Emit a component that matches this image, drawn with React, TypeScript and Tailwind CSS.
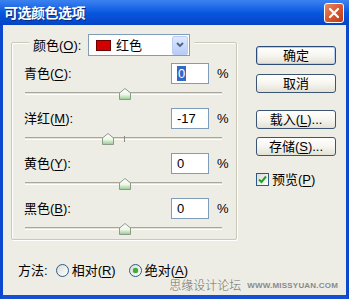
import React from "react";

const U = ({ c }: { c: string }) => <span className="underline underline-offset-[2px]">{c}</span>;

function Thumb({ x }: { x: number }) {
  return (
    <svg
      className="absolute top-[4px]"
      style={{ left: x - 6 }}
      width="12"
      height="12"
      viewBox="0 0 12 12"
    >
      <defs>
        <linearGradient id={`tg${x}`} x1="0" y1="0" x2="0" y2="1">
          <stop offset="0" stopColor="#ffffff" />
          <stop offset="0.55" stopColor="#eef5ea" />
          <stop offset="1" stopColor="#8fcf86" />
        </linearGradient>
      </defs>
      <polygon points="6,0.5 11.5,5 11.5,11.5 0.5,11.5 0.5,5" fill={`url(#tg${x})`} stroke="#8c9c88" />
    </svg>
  );
}

function Row({
  label,
  acc,
  value,
  thumb,
  selected,
  tick,
}: {
  label: string;
  acc: string;
  value: string;
  thumb: number;
  selected?: boolean;
  tick?: boolean;
}) {
  return (
    <div className="flex flex-col">
      <div className="flex items-center h-[21px]">
        <div className="w-[147px] text-[13px] leading-none text-black">
          {label}(<U c={acc} />):
        </div>
        <div className="w-[38px] h-[21px] border border-[#7f9db9] bg-white flex items-center pl-[5px] text-[13px] leading-none">
          {selected ? (
            <span className="bg-[#316ac5] text-white px-[1px] h-[15px] flex items-center">{value}</span>
          ) : (
            <span className="text-black">{value}</span>
          )}
        </div>
        <div className="ml-[8px] text-[13px] leading-none text-black">%</div>
      </div>
      <div className="relative h-[24px]">
        <div className="absolute left-[1px] top-[8px] w-[197px] h-[3px] border-t border-[#a9a798] border-b border-b-white bg-[#e4e2d6]" />
        {tick && <div className="absolute left-[100px] top-[7px] w-[1px] h-[6px] bg-[#8d8b7e]" />}
        <Thumb x={thumb} />
      </div>
    </div>
  );
}

function Btn({ children, def }: { children: React.ReactNode; def?: boolean }) {
  return (
    <div
      className={
        "w-[80px] h-[19px] rounded-[3px] border flex items-center justify-center text-[13px] leading-none text-black bg-linear-to-b from-white via-[#f6f5f0] to-[#e3e1d6] " +
        (def ? "border-[#2c4b78] shadow-[inset_0_0_0_1px_#b7cff3]" : "border-[#3b5573]")
      }
    >
      {children}
    </div>
  );
}

function Radio({ on }: { on?: boolean }) {
  return (
    <div className="w-[13px] h-[13px] rounded-full border border-[#2a5a8a] bg-linear-to-br from-[#dcdcd4] to-white flex items-center justify-center">
      {on && <div className="w-[5px] h-[5px] rounded-full bg-[#3fae3a] shadow-[0_0_1px_#2a8a2a]" />}
    </div>
  );
}

export default function App() {
  return (
    <div className="w-[349px] h-[299px] flex flex-col font-['Liberation_Sans','Noto_Sans_CJK_SC',sans-serif] overflow-hidden">
      {/* Title bar */}
      <div className="h-[25px] flex items-center justify-between pl-[4px] pr-[5px] bg-linear-to-b from-[#3b82f0] via-[#0858e0] to-[#0444c6] shrink-0">
        <span className="text-white font-bold text-[14px] leading-none tracking-[-0.5px] [text-shadow:1px_1px_0_#0a2a80]">
          可选颜色选项
        </span>
        <div className="w-[20px] h-[20px] rounded-[3px] border border-white bg-linear-to-br from-[#e98a66] via-[#d9572f] to-[#b93c1c] flex items-center justify-center">
          <svg width="12" height="12" viewBox="0 0 12 12">
            <path d="M2 2 L10 10 M10 2 L2 10" stroke="#fff" strokeWidth="2.2" strokeLinecap="round" />
          </svg>
        </div>
      </div>

      {/* Body */}
      <div className="flex-1 bg-[#eeede5] border-x-[3px] border-b-[4px] border-x-[#0c47cf] border-b-[#1650d2] flex flex-col">
        <div className="flex pt-[17px] pl-[8px]">
          {/* Group box */}
          <div className="relative w-[226px] h-[198px] border border-[#cbc8b8] rounded-[2px] shadow-[inset_1px_1px_0_#ffffff,1px_1px_0_#ffffff] pt-[20px] pl-[12px]">
            <div className="absolute left-[17px] top-[-9px] flex items-center bg-[#eeede5] pl-[4px] pr-[4px]">
              <span className="text-[13px] leading-none text-black w-[55px]">
                颜色(<U c="O" />):
              </span>
              <div className="w-[102px] h-[22px] border border-[#7f9db9] bg-white flex items-center pl-[7px] pr-[1px]">
                <div className="w-[15px] h-[11px] bg-[#d40000] border border-[#6b0000]" />
                <span className="ml-[5px] text-[13px] leading-none text-black flex-1">红色</span>
                <div className="w-[16px] h-[19px] rounded-[2px] border border-[#b9cdf5] bg-linear-to-b from-[#dfe9fd] to-[#b6cbf6] flex items-center justify-center">
                  <svg width="8" height="6" viewBox="0 0 8 6">
                    <path d="M1 1 L4 4 L7 1" stroke="#4d6185" strokeWidth="1.8" fill="none" />
                  </svg>
                </div>
              </div>
            </div>
            <Row label="青色" acc="C" value="0" thumb={101} selected />
            <Row label="洋红" acc="M" value="-17" thumb={84} tick />
            <Row label="黄色" acc="Y" value="0" thumb={101} />
            <Row label="黑色" acc="B" value="0" thumb={101} />
          </div>

          {/* Right column */}
          <div className="ml-[19px] pt-[4px] flex flex-col">
            <Btn def>确定</Btn>
            <div className="mt-[9px]">
              <Btn>取消</Btn>
            </div>
            <div className="mt-[17px]">
              <Btn>
                载入(<U c="L" />)...
              </Btn>
            </div>
            <div className="mt-[8px]">
              <Btn>
                存储(<U c="S" />)...
              </Btn>
            </div>
            <div className="mt-[17px] flex items-center">
              <div className="w-[13px] h-[13px] border border-[#2a5a8a] bg-linear-to-br from-[#dcdcd4] to-white flex items-center justify-center">
                <svg width="9" height="9" viewBox="0 0 9 9">
                  <path d="M1 4.5 L3.5 7 L8 1.5" stroke="#21a121" strokeWidth="2" fill="none" />
                </svg>
              </div>
              <span className="ml-[3px] text-[13px] leading-none text-black">
                预览(<U c="P" />)
              </span>
            </div>
          </div>
        </div>

        {/* Bottom */}
        <div className="flex items-center pl-[15px] mt-[22px] h-[16px] text-[13px] leading-none text-black">
          <span>方法:</span>
          <div className="ml-[8px]">
            <Radio />
          </div>
          <span className="ml-[3px]">
            相对(<U c="R" />)
          </span>
          <div className="ml-[13px]">
            <Radio on />
          </div>
          <span className="ml-[3px]">
            绝对(<U c="A" />)
          </span>
        </div>
        <div className="flex items-center justify-end pr-[8px] h-[15px]">
          <span className="text-[12px] leading-none text-[#6d6d6d] font-light">思缘设计论坛</span>
          <span className="ml-[6px] text-[8px] font-bold leading-none text-[#8a8a8a] tracking-[0.2px]">WWW.MISSYUAN.COM</span>
        </div>
      </div>
    </div>
  );
}
